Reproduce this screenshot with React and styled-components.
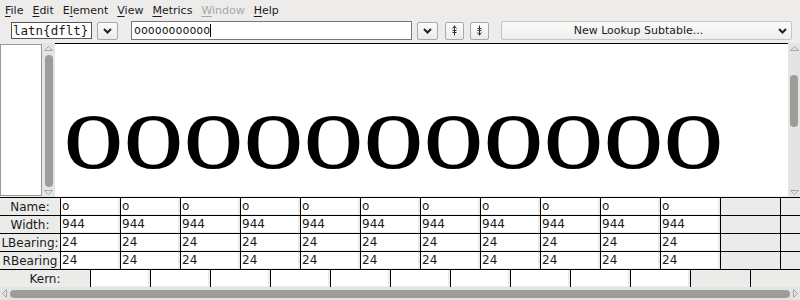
import styled, { createGlobalStyle } from "styled-components";

const Global = createGlobalStyle`
  html, body { margin: 0; padding: 0; background: #edeceb; }
  body { font-family: "DejaVu Sans", sans-serif; }
`;

const Window = styled.div`
  width: 800px;
  height: 300px;
  background: #edeceb;
  display: flex;
  flex-direction: column;
  overflow: hidden;
  color: #1a1a1a;
`;

const MenuBar = styled.div`
  height: 20px;
  display: flex;
  align-items: center;
  padding-left: 5px;
  gap: 9px;
  font-size: 11px;
`;

const MenuItem = styled.span`
  color: ${(p) => (p.$disabled ? "#a6a6a6" : "#1a1a1a")};
  u { text-decoration-thickness: 1px; text-underline-offset: 2px; }
`;

const Toolbar = styled.div`
  height: 23px;
  display: flex;
  align-items: center;
  padding-left: 11px;
  box-sizing: border-box;
  padding-bottom: 2px;
`;

const ScriptBox = styled.div`
  width: 81px;
  height: 17px;
  background: #fff;
  border: 1px solid #555;
  box-sizing: border-box;
  font-family: "DejaVu Sans Mono", monospace;
  font-size: 12.5px;
  line-height: 15px;
  padding-left: 1px;
`;

const SmallButton = styled.div`
  width: ${(p) => p.$w || 21}px;
  height: 18px;
  box-sizing: border-box;
  border: 1px solid #a9a9a7;
  border-radius: 2px;
  background: linear-gradient(#fbfbfb, #ecebea);
  display: flex;
  align-items: center;
  justify-content: center;
  margin-left: ${(p) => p.$gap || 0}px;
`;

const TextField = styled.div`
  width: 281px;
  height: 19px;
  margin-left: 13px;
  background: #fff;
  border: 1px solid #777;
  box-sizing: border-box;
  font-family: "DejaVu Sans Mono", monospace;
  font-size: 11.5px;
  line-height: 17px;
  padding-left: 2px;
  display: flex;
  align-items: center;
`;

const Caret = styled.span`
  display: inline-block;
  width: 1px;
  height: 13px;
  background: #000;
`;

const LookupButton = styled.div`
  width: 291px;
  height: 19px;
  margin-left: 12px;
  box-sizing: border-box;
  border: 1px solid #c5c5c3;
  border-radius: 2px;
  background: linear-gradient(#fafafa, #efeeed);
  display: flex;
  align-items: center;
  font-size: 11px;
`;

const LookupLabel = styled.span`
  flex: 1;
  text-align: center;
  padding-left: 2px;
`;

const LookupArrow = styled.span`
  width: 18px;
  display: flex;
  justify-content: center;
`;

const Main = styled.div`
  height: 154px;
  display: flex;
`;

const SidePanel = styled.div`
  width: 42px;
  margin-top: 1px;
  margin-bottom: 1px;
  background: #fff;
  border: 1px solid #999;
  box-sizing: border-box;
`;

const VTrough = styled.div`
  width: ${(p) => p.$w}px;
  background: #e4e4e2;
  display: flex;
  flex-direction: column;
  align-items: center;
  justify-content: space-between;
  padding: 3px 0 2px;
  box-sizing: border-box;
`;

const VThumbArea = styled.div`
  flex: 1;
  width: 100%;
  display: flex;
  flex-direction: column;
  align-items: center;
  padding: ${(p) => p.$pad};
`;

const VThumb = styled.div`
  width: 8px;
  border-radius: 4px;
  background: #9c9c99;
  height: ${(p) => p.$h};
`;

const Canvas = styled.div`
  flex: 1;
  background: #fff;
  border-top: 1px solid #000;
  margin-bottom: 1px;
  padding: 20px 0 0 8px;
  overflow: hidden;
`;

const Glyphs = styled.div`
  font-family: "Liberation Serif", "Times New Roman", serif;
  font-size: 122px;
  line-height: 122px;
  letter-spacing: -1px;
  white-space: nowrap;
  color: #000;
  transform: scaleY(0.91);
  transform-origin: left bottom;
`;

const Table = styled.div`
  display: flex;
  flex-direction: column;
  border-top: 1px solid #000;
`;

const Row = styled.div`
  display: flex;
  height: 18px;
  border-bottom: 1px solid #000;
  box-sizing: border-box;
  font-size: 12px;
`;

const KernRow = styled.div`
  display: flex;
  height: 17px;
  font-size: 12px;
`;

const Label = styled.div`
  width: ${(p) => p.$w}px;
  flex: none;
  background: #ebebea;
  display: flex;
  align-items: center;
  justify-content: center;
  white-space: nowrap;
  overflow: hidden;
`;

const Cell = styled.div`
  width: 60px;
  flex: none;
  border-left: 1px solid #000;
  box-sizing: border-box;
  background: #ebebea;
  display: flex;
`;

const CellEntry = styled.div`
  flex: 1;
  margin: 0 2px 1px 0;
  background: #fff;
  line-height: 17px;
  padding-left: 1px;
`;

const HScroll = styled.div`
  flex: 1;
  background: #e4e4e2;
  display: flex;
  align-items: center;
  padding: 0 2px;
  gap: 3px;
`;

const HThumb = styled.div`
  flex: 1;
  height: 8px;
  border-radius: 4px;
  background: #9c9c99;
`;

const Chevron = () => (
  <svg width="9" height="6" viewBox="0 0 9 6">
    <path d="M1 1 L4.5 4.5 L8 1" fill="none" stroke="#222" strokeWidth="2" />
  </svg>
);

const NavIcon = ({ down }) => (
  <svg width="5" height="11" viewBox="0 0 5 11">
    <path d="M2.5 0.5 V10.5" stroke="#333" strokeWidth="1" />
    {down ? (
      <>
        <path d="M0.5 3.5 H4.5 M0.5 5.5 H4.5" stroke="#333" strokeWidth="1" />
        <path d="M0.5 7.5 L2.5 10 L4.5 7.5" fill="none" stroke="#333" strokeWidth="1" />
      </>
    ) : (
      <>
        <path d="M0.5 3.5 L2.5 1 L4.5 3.5" fill="none" stroke="#333" strokeWidth="1" />
        <path d="M0.5 5.5 H4.5 M0.5 7.5 H4.5" stroke="#333" strokeWidth="1" />
      </>
    )}
  </svg>
);

const Arrow = ({ dir }) => {
  const pts = {
    up: "0.5,4.5 4.5,0.5 8.5,4.5",
    down: "0.5,0.5 4.5,4.5 8.5,0.5",
    left: "4.5,0.5 0.5,4.5 4.5,8.5",
    right: "0.5,0.5 4.5,4.5 0.5,8.5",
  }[dir];
  const horiz = dir === "left" || dir === "right";
  return (
    <svg width={horiz ? 5 : 9} height={horiz ? 9 : 5} viewBox={horiz ? "0 0 5 9" : "0 0 9 5"}>
      <polygon points={pts} fill="none" stroke="#a8a8a6" strokeWidth="1" />
    </svg>
  );
};

const menus = [
  ["F", "ile"],
  ["E", "dit"],
  ["E", "lement", true],
  ["V", "iew"],
  ["M", "etrics"],
  ["W", "indow", false, true],
  ["H", "elp"],
];

const rows = [
  ["Name:", "o"],
  ["Width:", "944"],
  ["LBearing:", "24"],
  ["RBearing", "24"],
];

const glyphCount = 11;

export default function App() {
  return (
    <Window>
      <Global />
      <MenuBar>
        {menus.map(([a, b, secondLetter, disabled]) => (
          <MenuItem key={a + b} $disabled={disabled}>
            {secondLetter ? (
              <>
                {a}
                <u>{b[0]}</u>
                {b.slice(1)}
              </>
            ) : (
              <>
                <u>{a}</u>
                {b}
              </>
            )}
          </MenuItem>
        ))}
      </MenuBar>
      <Toolbar>
        <ScriptBox>latn{"{dflt}"}</ScriptBox>
        <SmallButton $gap={5}>
          <Chevron />
        </SmallButton>
        <TextField>
          ooooooooooo
          <Caret />
        </TextField>
        <SmallButton $gap={5}>
          <Chevron />
        </SmallButton>
        <SmallButton $gap={7} $w={19}>
          <NavIcon />
        </SmallButton>
        <SmallButton $gap={6} $w={19}>
          <NavIcon down />
        </SmallButton>
        <LookupButton>
          <LookupLabel>New Lookup Subtable...</LookupLabel>
          <LookupArrow>
            <Chevron />
          </LookupArrow>
        </LookupButton>
      </Toolbar>
      <Main>
        <SidePanel />
        <VTrough $w={13}>
          <Arrow dir="up" />
          <VThumbArea $pad="4px 0 3px">
            <VThumb $h="100%" />
          </VThumbArea>
          <Arrow dir="down" />
        </VTrough>
        <Canvas>
          <Glyphs>{"o".repeat(glyphCount)}</Glyphs>
        </Canvas>
        <VTrough $w={12}>
          <Arrow dir="up" />
          <VThumbArea $pad="24px 0 0">
            <VThumb $h="52px" />
          </VThumbArea>
          <Arrow dir="down" />
        </VTrough>
      </Main>
      <Table>
        {rows.map(([label, value]) => (
          <Row key={label}>
            <Label $w={60}>{label}</Label>
            {Array.from({ length: 13 }).map((_, i) => (
              <Cell key={i}>{i < glyphCount && <CellEntry>{value}</CellEntry>}</Cell>
            ))}
          </Row>
        ))}
        <KernRow>
          <Label $w={90}>Kern:</Label>
          {Array.from({ length: 12 }).map((_, i) => (
            <Cell key={i}>{i < 10 && <CellEntry />}</Cell>
          ))}
        </KernRow>
      </Table>
      <HScroll>
        <Arrow dir="left" />
        <HThumb />
        <Arrow dir="right" />
      </HScroll>
    </Window>
  );
}
